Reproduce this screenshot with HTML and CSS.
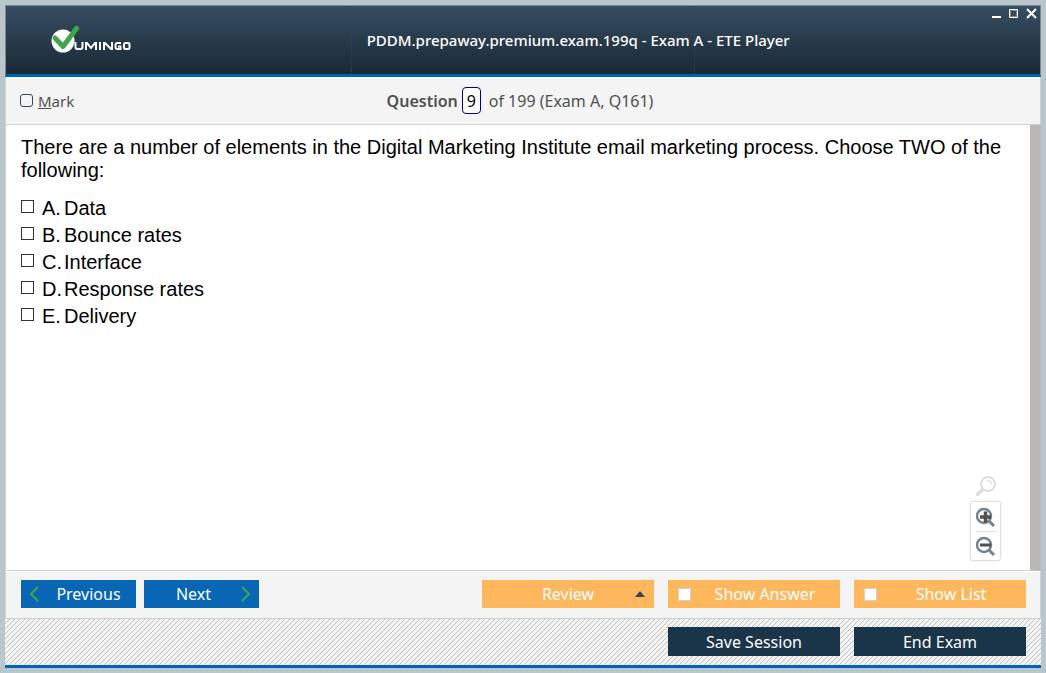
FILE: index.html
```html
<!DOCTYPE html>
<html lang="en">
<head>
<meta charset="utf-8">
<title>ETE Player</title>
<link rel="stylesheet" href="styles.css">
</head>
<body>
<div class="app">
  <header class="titlebar">
    <svg class="logo" width="80" height="34" viewBox="0 0 80 34" role="img" aria-label="Vumingo">
      <circle cx="12" cy="18" r="11.500" fill="#fff"/>
      <path d="M4 15L12 23.500L25.500 5.500" fill="none" stroke="#41a648" stroke-width="5" stroke-linecap="round" stroke-linejoin="round"/>
      <g fill="none" stroke="#fff" stroke-width="2">
        <path d="M24.500 19V24Q24.500 26 26.500 26H29.500Q31.500 26 31.500 24V19"/>
        <path d="M35 27V20H36L40 25L44 20H45V27"/>
        <path d="M49 19V27"/>
        <path d="M53 27V20H54L60 26H61V19"/>
        <path d="M70 20H66.500Q64.500 20 64.500 22V24Q64.500 26 66.500 26H69.500V23.500H67"/>
        <rect x="73" y="20" width="5.500" height="6" rx="1.500"/>
      </g>
    </svg>
    <div class="title-cell"><h1 class="title">PDDM.prepaway.premium.exam.199q - Exam A - ETE Player</h1></div>
    <div class="window-controls">
      <button class="window-button" aria-label="Minimize"><svg width="11" height="11" viewBox="0 0 11 11"><path d="M2 9H11" stroke="#fff" stroke-width="2"/></svg></button>
      <button class="window-button" aria-label="Maximize"><svg width="11" height="11" viewBox="0 0 11 11"><path d="M1.500 1.500H9.500V9.500H1.500Z" fill="none" stroke="#fff"/><path d="M2.500 2.500H8.500V8.500H2.500Z" fill="none" stroke="#8b8378"/></svg></button>
      <button class="window-button" aria-label="Close"><svg width="11" height="11" viewBox="0 0 11 11"><path d="M1 1L10 10M10 1L1 10" stroke="#fff" stroke-width="2"/></svg></button>
    </div>
  </header>

  <div class="question-bar">
    <label class="mark"><input class="mark-box" type="checkbox"><span><u>M</u>ark</span></label>
    <div class="position">
      <label class="position-label" for="number">Question</label>
      <input class="position-number" id="number" type="text" value="9">
      <span>of 199 (Exam A, Q161)</span>
    </div>
  </div>

  <main class="content">
    <p class="question">There are a number of elements in the Digital Marketing Institute email marketing process. Choose TWO of the following:</p>
    <div class="answers">
      <label class="answer"><input class="answer-box" type="checkbox"><span class="letter">A.</span><span>Data</span></label>
      <label class="answer"><input class="answer-box" type="checkbox"><span class="letter">B.</span><span>Bounce rates</span></label>
      <label class="answer"><input class="answer-box" type="checkbox"><span class="letter">C.</span><span>Interface</span></label>
      <label class="answer"><input class="answer-box" type="checkbox"><span class="letter">D.</span><span>Response rates</span></label>
      <label class="answer"><input class="answer-box" type="checkbox"><span class="letter">E.</span><span>Delivery</span></label>
    </div>
    <div class="zoom">
      <svg width="22" height="22" viewBox="0 0 22 22" fill="none" stroke="#dedede" stroke-linecap="round"><circle cx="13" cy="9" r="7" stroke-width="2"/><path d="M7.500 14.500L2.500 19.500" stroke-width="3.500"/><path d="M12.500 5.500Q15.500 5.500 16.500 8.500" stroke-width="1.500"/></svg>
      <div class="zoom-panel">
        <button class="zoom-button" aria-label="Zoom in"><svg width="20" height="20" viewBox="0 0 20 20" fill="none"><circle cx="8" cy="9" r="7" stroke="#75838d" stroke-width="2.500"/><path d="M13 14L18 19" stroke="#75838d" stroke-width="3"/><path d="M4 10H15M9.500 4.500V15.500" stroke="#505050" stroke-width="3.500"/></svg></button>
        <button class="zoom-button" aria-label="Zoom out"><svg width="20" height="20" viewBox="0 0 20 20" fill="none"><circle cx="8" cy="9" r="7" stroke="#75838d" stroke-width="2.500"/><path d="M13 14L18 19" stroke="#75838d" stroke-width="3"/><path d="M4 9H15" stroke="#505050" stroke-width="3"/></svg></button>
      </div>
    </div>
  </main>

  <nav class="toolbar">
    <button class="button nav-button"><svg width="10" height="16" viewBox="0 0 10 16"><path d="M9 1L2 8L9 15" fill="none" stroke="#41a648" stroke-width="2"/></svg><span class="caption previous">Previous</span></button>
    <button class="button nav-button"><span class="caption next">Next</span><svg width="10" height="16" viewBox="0 0 10 16"><path d="M1 1L8 8L1 15" fill="none" stroke="#41a648" stroke-width="2"/></svg></button>
    <div class="tools">
      <button class="button tool"><span class="caption review">Review</span><svg width="10" height="6" viewBox="0 0 10 6"><path d="M0 6L5 0L10 6Z" fill="#33475a"/></svg></button>
      <label class="button tool"><input class="tool-box" type="checkbox"><span class="caption">Show Answer</span></label>
      <label class="button tool"><input class="tool-box" type="checkbox"><span class="caption">Show List</span></label>
    </div>
  </nav>

  <footer class="footer">
    <button class="button session">Save Session</button>
    <button class="button session">End Exam</button>
  </footer>
</div>
</body>
</html>
```
FILE: styles.css
```css
* { box-sizing: border-box; }

body {
  margin: 0;
  background: #b9c6cc;
  font: 16px/20px "Noto Sans", sans-serif;
  color: #505050;
}

button, input { font: inherit; margin: 0; }
input[type="checkbox"] { appearance: none; flex: none; width: 13px; height: 13px; }

.app {
  display: flex;
  flex-direction: column;
  min-height: 100vh;
  border: 5px solid #b9c6cc;
}

.titlebar {
  display: grid;
  grid-template-columns: repeat(3, minmax(0, 1fr));
  height: 72px;
  border: 1px solid #7b8b90;
  border-bottom: 3px solid #0062b3;
  background: linear-gradient(#364e62, #1a2834);
}
.logo { align-self: center; margin-left: 45px; }
.title-cell {
  display: flex;
  align-items: center;
  padding-left: 15px;
  border: dotted #2d4468;
  border-width: 0 1px;
}
.title { margin: 0; font-size: 15px; font-weight: 500; color: #fff; white-space: nowrap; }
.window-controls { display: flex; justify-content: flex-end; gap: 7px; padding: 2px 3px; }
.window-button { display: block; width: 11px; height: 11px; padding: 0; border: 0; background: none; }
.window-button svg { display: block; }

.question-bar {
  display: grid;
  grid-template-columns: 1fr auto 1fr;
  align-items: center;
  height: 48px;
  padding: 0 20px 0 14px;
  background: #f4f4f4;
  border: 1px solid #d0d0d0;
  border-top: 0;
}
.mark { display: flex; align-items: center; gap: 5px; font-size: 15px; }
.mark-box { border: 1px solid #33475a; border-radius: 3px; }
.position { display: flex; align-items: center; gap: 4px; }
.position-label { font-weight: 600; }
.position-number {
  width: 19px;
  height: 27px;
  padding: 0;
  margin-right: 4px;
  border: 1px solid #000080;
  border-radius: 4px;
  background: #fff;
  color: #000;
  text-align: center;
}

.content {
  position: relative;
  flex: 1;
  padding: 11px 26px 10px 15px;
  background: #fff;
  border-left: 1px solid #d0d0d0;
  border-right: 11px solid #bab9b5;
  border-bottom: 1px solid #d0d0d0;
  font: 20px/23px "Liberation Sans", sans-serif;
  color: #000;
}
.question { margin: 0; }
.answers { margin-top: 13px; }
.answer { display: flex; align-items: center; width: max-content; height: 27px; }
.answer-box { border: 1px solid #333; margin: 0 8px 4px 0; }
.letter { width: 22px; }

.zoom {
  position: absolute;
  right: 29px;
  bottom: 9px;
  display: flex;
  flex-direction: column;
  align-items: center;
  gap: 4px;
}
.zoom-panel { width: 31px; padding: 0 5px; border: 1px solid #e0e0e0; border-radius: 3px; box-shadow: 0 0 2px #ddd; }
.zoom-button { display: block; height: 29px; padding: 0; border: 0; background: none; }
.zoom-button + .zoom-button { border-top: 1px solid #ddd; }
.zoom-button svg { display: block; }

.toolbar {
  display: flex;
  gap: 8px;
  padding: 8px 14px 10px 15px;
  border: 1px solid #d0d0d0;
  border-top-color: #fff;
  background: #f4f4f4;
}
.button { display: flex; align-items: center; height: 28px; border: 0; color: #fff; }
.caption { flex: 1; text-align: center; }
.previous { padding-left: 10px; }
.next { padding-right: 6px; }
.review { padding-left: 10px; }
.nav-button { width: 115px; padding: 0 8px; background: #0866b5; }
.tools { display: flex; gap: 14px; margin-left: auto; }
.tool { width: 172px; padding: 0 9px; background: #ffb75d; }
.tool-box { background: #fff; border: 1px solid #d0d0d0; margin: 0 8px 0 1px; }

.footer {
  display: flex;
  justify-content: flex-end;
  gap: 14px;
  padding: 8px 15px 9px;
  border-bottom: 3px solid #0062b3;
  background: linear-gradient(135deg, #f4f4f4 45%, #c0c0c0 45% 55%, #f4f4f4 55%) 0 0 / 5px 5px;
}
.session { justify-content: center; width: 172px; height: 29px; background: #1a3449; }
```
